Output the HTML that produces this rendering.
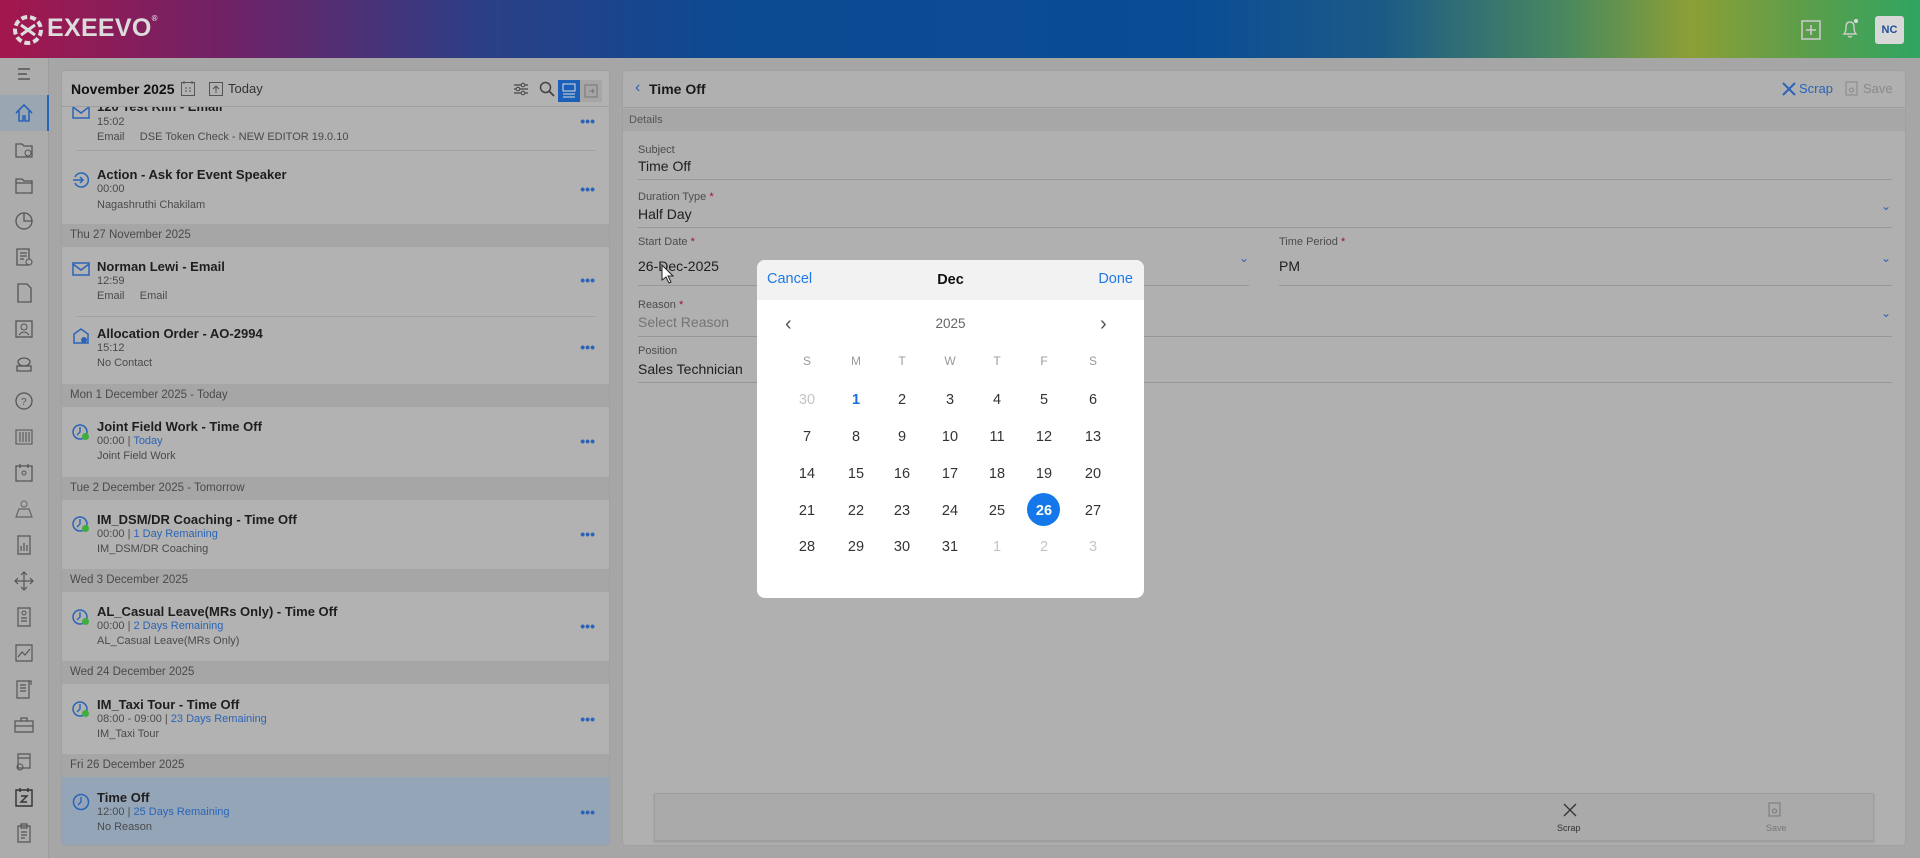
<!DOCTYPE html>
<html><head><meta charset="utf-8"><style>
*{margin:0;padding:0;box-sizing:border-box}
body{width:1920px;height:858px;overflow:hidden;background:#a6a6a6;font-family:"Liberation Sans",sans-serif;position:relative;color:#1a1a1a}
.a{position:absolute}
.hdr{left:0;top:0;width:1920px;height:58px;background:linear-gradient(90deg,#a3174d 0%,#6a2468 13%,#2c3f86 25%,#0c4a92 38%,#0a4d95 62%,#1c5a86 72%,#4d8a5c 82%,#8c9f36 88%,#5c9e4a 94%,#2fa562 100%)}
.side{left:0;top:58px;width:49px;height:800px;background:#acacac;border-right:1px solid #9c9c9c}
.si{position:absolute;left:13px;width:22px;height:22px}
.lp{left:61px;top:70px;width:549px;height:776px;background:#b2b2b2;border:1px solid #a0a0a0;border-radius:4px;overflow:hidden}
.rp{left:622px;top:70px;width:1284px;height:776px;background:#b0b0b0;border:1px solid #a0a0a0;border-radius:4px}
.band{position:absolute;left:0;width:549px;height:23px;background:#a6a6a6;font-size:11.5px;color:#4a4a4a;padding-left:8px;line-height:23px}
.t{position:absolute;left:35px;font-size:13px;font-weight:bold;color:#1e1e1e}
.s{position:absolute;left:35px;font-size:11px;color:#4a4a4a}
.b{color:#2a64b8}
.dots{position:absolute;right:14px;font-size:14px;color:#2a64b8;font-weight:bold}
.ic{position:absolute;left:10px;width:18px;height:18px}
.lbl{position:absolute;font-size:11px;color:#4c4c4c}
.val{position:absolute;font-size:14px;color:#1e1e1e}
.ul{position:absolute;height:1px;background:#979797}
.chev{position:absolute;color:#2a64b8;font-size:12px}
.pop{left:757px;top:260px;width:387px;height:338px;background:#fff;border-radius:8px;overflow:hidden}
.d{position:absolute;width:40px;text-align:center;font-size:14.5px;color:#333;transform:translateX(-20px)}
.g{color:#c4c4c4}
.w{position:absolute;width:40px;text-align:center;font-size:12px;color:#9a9a9a;transform:translateX(-20px);top:94px}
</style></head><body>
<div class="a hdr">
 <svg class="a" style="left:13px;top:15px" width="30" height="30" viewBox="0 0 30 30"><circle cx="15" cy="15" r="13" fill="none" stroke="#ddd" stroke-width="4" stroke-dasharray="6 3"/><path d="M8 10 L22 20 M22 10 L8 20" stroke="#ddd" stroke-width="3"/></svg>
 <div class="a" style="left:47px;top:14px;font-size:25px;font-weight:bold;color:#dcdcdc;letter-spacing:0.3px">EXEEVO<sup style="font-size:8px;vertical-align:top">®</sup></div>
 <svg class="a" style="left:1801px;top:20px" width="20" height="20"><rect x="1" y="1" width="18" height="18" fill="none" stroke="#ccc" stroke-width="1.5"/><path d="M10 5v10M5 10h10" stroke="#ccc" stroke-width="1.5"/></svg>
 <svg class="a" style="left:1840px;top:17px" width="20" height="24"><path d="M4 17 Q6 15 6 10 Q6 5 10 5 Q14 5 14 10 Q14 15 16 17 Z M8 19 Q10 21 12 19" fill="none" stroke="#ccc" stroke-width="1.4"/><circle cx="16" cy="4" r="2" fill="#ddd"/></svg>
 <div class="a" style="left:1875px;top:16px;width:29px;height:28px;background:#d8d8d8;border-radius:3px;font-size:11px;font-weight:bold;color:#1f4f9a;text-align:center;line-height:28px">NC</div>
</div>
<div class="a side">
 <div class="a" style="left:0;top:37px;width:49px;height:36px;background:#9ba6b3;border-right:2px solid #2a64b8"></div>
 <svg class="si" style="top:5px" viewBox="0 0 22 22"><path d="M5 6h12M5 11h9M5 16h12" stroke="#555" stroke-width="1.4"/></svg>
 <svg class="si" style="top:44px" viewBox="0 0 22 22"><path d="M3 11 L11 3 L19 11 M6 9 V19 H10 V14 H12 V19 H16 V9" fill="none" stroke="#2a64b8" stroke-width="1.6"/></svg>
 <svg class="si" style="top:80px" viewBox="0 0 22 22"><path d="M3 6h6l2 2h8v11H3z" fill="none" stroke="#555" stroke-width="1.3"/><circle cx="15" cy="15" r="3" fill="none" stroke="#555"/></svg>
 <svg class="si" style="top:116px" viewBox="0 0 22 22"><path d="M3 5h6l2 2h8v12H3z M3 9h16" fill="none" stroke="#555" stroke-width="1.3"/></svg>
 <svg class="si" style="top:152px" viewBox="0 0 22 22"><circle cx="11" cy="11" r="8" fill="none" stroke="#555" stroke-width="1.3"/><path d="M11 3v8h8" fill="none" stroke="#555" stroke-width="1.3"/></svg>
 <svg class="si" style="top:188px" viewBox="0 0 22 22"><path d="M4 3h12v16H4z M7 7h7M7 10h7M7 13h4" fill="none" stroke="#555" stroke-width="1.3"/><circle cx="16" cy="16" r="3" fill="#acacac" stroke="#555"/></svg>
 <svg class="si" style="top:224px" viewBox="0 0 22 22"><path d="M5 2h9l4 4v14H5z" fill="none" stroke="#555" stroke-width="1.3"/></svg>
 <svg class="si" style="top:260px" viewBox="0 0 22 22"><rect x="3" y="3" width="16" height="16" fill="none" stroke="#555" stroke-width="1.3"/><circle cx="11" cy="9" r="3" fill="none" stroke="#555"/><path d="M6 17q5-6 10 0" fill="none" stroke="#555"/></svg>
 <svg class="si" style="top:296px" viewBox="0 0 22 22"><ellipse cx="11" cy="8" rx="6" ry="4" fill="none" stroke="#555" stroke-width="1.3"/><path d="M4 12h14v5H4z" fill="none" stroke="#555" stroke-width="1.3"/></svg>
 <svg class="si" style="top:332px" viewBox="0 0 22 22"><circle cx="11" cy="11" r="8" fill="none" stroke="#555" stroke-width="1.3"/><text x="8" y="15" font-size="10" fill="#555" font-family="Liberation Sans">?</text></svg>
 <svg class="si" style="top:368px" viewBox="0 0 22 22"><path d="M3 4h16v14H3z M7 6v10M10 6v10M13 6v10M16 6v10" fill="none" stroke="#555" stroke-width="1.1"/></svg>
 <svg class="si" style="top:404px" viewBox="0 0 22 22"><path d="M3 4h16v15H3z M7 2v4M15 2v4" fill="none" stroke="#555" stroke-width="1.3"/><circle cx="11" cy="11" r="2" fill="none" stroke="#555"/></svg>
 <svg class="si" style="top:440px" viewBox="0 0 22 22"><circle cx="11" cy="6" r="3" fill="none" stroke="#666"/><path d="M3 19l3-8h10l3 8z" fill="none" stroke="#666" stroke-width="1.2"/></svg>
 <svg class="si" style="top:476px" viewBox="0 0 22 22"><path d="M5 2h12v18H5z M8 12v5M11 9v8M14 11v6" fill="none" stroke="#555" stroke-width="1.2"/></svg>
 <svg class="si" style="top:512px" viewBox="0 0 22 22"><path d="M11 2v18M2 11h18M8 5l3-3 3 3M8 17l3 3 3-3M5 8l-3 3 3 3M17 8l3 3-3 3" fill="none" stroke="#555" stroke-width="1.2"/></svg>
 <svg class="si" style="top:548px" viewBox="0 0 22 22"><path d="M5 2h12v18H5z M8 12h6M8 15h6" fill="none" stroke="#555" stroke-width="1.2"/><circle cx="11" cy="7" r="2" fill="none" stroke="#555"/></svg>
 <svg class="si" style="top:584px" viewBox="0 0 22 22"><path d="M3 3h16v16H3z M5 15l4-5 3 3 5-6" fill="none" stroke="#555" stroke-width="1.2"/></svg>
 <svg class="si" style="top:620px" viewBox="0 0 22 22"><path d="M4 3h12v17H4z M7 7h6M7 10h6M7 13h6M16 3h2v4" fill="none" stroke="#555" stroke-width="1.2"/></svg>
 <svg class="si" style="top:656px" viewBox="0 0 22 22"><path d="M2 7h18v11H2z M8 7V4h6v3M2 12h18" fill="none" stroke="#555" stroke-width="1.2"/></svg>
 <svg class="si" style="top:692px" viewBox="0 0 22 22"><path d="M5 4h12v14H5z M5 8h12" fill="none" stroke="#555" stroke-width="1.2"/><circle cx="7" cy="17" r="3" fill="none" stroke="#555"/></svg>
 <svg class="si" style="top:728px" viewBox="0 0 22 22"><path d="M3 4h16v16H3z M7 2v4M15 2v4M8 10h6l-6 6h6" fill="none" stroke="#333" stroke-width="1.4"/></svg>
 <svg class="si" style="top:764px" viewBox="0 0 22 22"><path d="M5 4h12v16H5z M8 2h6v4H8z M8 10h6M8 13h6M8 16h4" fill="none" stroke="#555" stroke-width="1.2"/></svg>
</div>

<div class="a lp">
 <div class="a" style="left:9px;top:44px;width:530px;height:1px"></div>
 <!-- item 1 (cut) -->
 <svg class="ic" style="top:32px" viewBox="0 0 18 18"><rect x="1" y="3" width="16" height="12" fill="none" stroke="#2a64b8" stroke-width="1.5"/><path d="M1 4l8 6 8-6" fill="none" stroke="#2a64b8" stroke-width="1.5"/></svg>
 <div class="t" style="top:28px">120 Test Klin - Email</div>
 <div class="s" style="top:45px">15:02</div>
 <div class="s" style="top:60px">Email &nbsp;&nbsp;&nbsp; DSE Token Check - NEW EDITOR 19.0.10</div>
 <div class="dots" style="top:42px">•••</div>
 <div class="a" style="left:14px;top:79px;width:520px;height:1px;background:#a2a2a2"></div>
 <div class="a" style="left:0;top:0;width:549px;height:36px;border-bottom:1px solid #9e9e9e;background:#b2b2b2"></div>
 <div class="a" style="left:9px;top:10px;font-size:14px;font-weight:bold;color:#111">November 2025</div>
 <svg class="a" style="left:118px;top:9px" width="16" height="17"><rect x="1.5" y="2.5" width="13" height="13" fill="none" stroke="#555"/><path d="M4 1v3M12 1v3M5 8h2M9 8h2M5 11h2M9 11h2" stroke="#555"/></svg>
 <svg class="a" style="left:146px;top:9px" width="16" height="17"><rect x="1.5" y="2.5" width="13" height="13" fill="none" stroke="#555"/><path d="M8 6v7M5 9l3-3 3 3" fill="none" stroke="#555"/></svg>
 <div class="a" style="left:166px;top:10px;font-size:13px;color:#333">Today</div>
 <svg class="a" style="left:451px;top:11px" width="16" height="14"><path d="M1 3h14M1 7h14M1 11h14" stroke="#444" stroke-width="1.3"/><circle cx="10" cy="3" r="1.8" fill="#b2b2b2" stroke="#444"/><circle cx="5" cy="7" r="1.8" fill="#b2b2b2" stroke="#444"/><circle cx="10" cy="11" r="1.8" fill="#b2b2b2" stroke="#444"/></svg>
 <svg class="a" style="left:477px;top:10px" width="16" height="16"><circle cx="6.5" cy="6.5" r="5" fill="none" stroke="#444" stroke-width="1.5"/><path d="M10 10l5 5" stroke="#444" stroke-width="1.8"/></svg>
 <div class="a" style="left:496px;top:9px;width:22px;height:22px;background:#1c5fb8"></div>
 <svg class="a" style="left:500px;top:12px" width="14" height="16"><rect x="1" y="1" width="12" height="7" fill="none" stroke="#ddd"/><path d="M1 11h12M1 14h12" stroke="#ddd"/></svg>
 <div class="a" style="left:518px;top:9px;width:22px;height:22px;background:#a6a6a6"></div>
 <svg class="a" style="left:522px;top:12px" width="14" height="15"><rect x="1" y="2" width="12" height="12" fill="none" stroke="#777"/><path d="M5 8h5M8 6l2 2-2 2" fill="none" stroke="#777"/></svg>

 <!-- action -->
 <svg class="ic" style="top:100px" viewBox="0 0 18 18"><path d="M3 6a7 7 0 1 1 0 6" fill="none" stroke="#2a64b8" stroke-width="1.5"/><path d="M1 9h10M8 6l3 3-3 3" fill="none" stroke="#2a64b8" stroke-width="1.5"/></svg>
 <div class="t" style="top:96px">Action - Ask for Event Speaker</div>
 <div class="s" style="top:112px">00:00</div>
 <div class="s" style="top:128px">Nagashruthi Chakilam</div>
 <div class="dots" style="top:110px">•••</div>
 <div class="band" style="top:153px">Thu 27 November 2025</div>
 <svg class="ic" style="top:189px" viewBox="0 0 18 18"><rect x="1" y="3" width="16" height="12" fill="none" stroke="#2a64b8" stroke-width="1.5"/><path d="M1 4l8 6 8-6" fill="none" stroke="#2a64b8" stroke-width="1.5"/></svg>
 <div class="t" style="top:188px">Norman Lewi - Email</div>
 <div class="s" style="top:204px">12:59</div>
 <div class="s" style="top:219px">Email &nbsp;&nbsp;&nbsp; Email</div>
 <div class="dots" style="top:201px">•••</div>
 <div class="a" style="left:14px;top:245px;width:520px;height:1px;background:#a2a2a2"></div>
 <svg class="ic" style="top:256px" viewBox="0 0 18 18"><path d="M2 16V7l7-5 7 5v9z" fill="none" stroke="#2a64b8" stroke-width="1.5"/><circle cx="12" cy="13" r="3" fill="#2a64b8"/></svg>
 <div class="t" style="top:255px">Allocation Order - AO-2994</div>
 <div class="s" style="top:271px">15:12</div>
 <div class="s" style="top:286px">No Contact</div>
 <div class="dots" style="top:268px">•••</div>
 <div class="band" style="top:313px">Mon 1 December 2025 - Today</div>
 <svg class="ic" style="top:352px" viewBox="0 0 18 18"><circle cx="8" cy="9" r="7" fill="none" stroke="#2a64b8" stroke-width="1.5"/><path d="M8 4v5l-3 3" fill="none" stroke="#2a64b8" stroke-width="1.4"/><circle cx="13.5" cy="13.5" r="3.5" fill="#3eae3e"/></svg>
 <div class="t" style="top:348px">Joint Field Work - Time Off</div>
 <div class="s" style="top:364px">00:00 | <span class="b">Today</span></div>
 <div class="s" style="top:379px">Joint Field Work</div>
 <div class="dots" style="top:362px">•••</div>
 <div class="band" style="top:406px">Tue 2 December 2025 - Tomorrow</div>
 <svg class="ic" style="top:444px" viewBox="0 0 18 18"><circle cx="8" cy="9" r="7" fill="none" stroke="#2a64b8" stroke-width="1.5"/><path d="M8 4v5l-3 3" fill="none" stroke="#2a64b8" stroke-width="1.4"/><circle cx="13.5" cy="13.5" r="3.5" fill="#3eae3e"/></svg>
 <div class="t" style="top:441px">IM_DSM/DR Coaching - Time Off</div>
 <div class="s" style="top:457px">00:00 | <span class="b">1 Day Remaining</span></div>
 <div class="s" style="top:472px">IM_DSM/DR Coaching</div>
 <div class="dots" style="top:455px">•••</div>
 <div class="band" style="top:498px">Wed 3 December 2025</div>
 <svg class="ic" style="top:537px" viewBox="0 0 18 18"><circle cx="8" cy="9" r="7" fill="none" stroke="#2a64b8" stroke-width="1.5"/><path d="M8 4v5l-3 3" fill="none" stroke="#2a64b8" stroke-width="1.4"/><circle cx="13.5" cy="13.5" r="3.5" fill="#3eae3e"/></svg>
 <div class="t" style="top:533px">AL_Casual Leave(MRs Only) - Time Off</div>
 <div class="s" style="top:549px">00:00 | <span class="b">2 Days Remaining</span></div>
 <div class="s" style="top:564px">AL_Casual Leave(MRs Only)</div>
 <div class="dots" style="top:547px">•••</div>
 <div class="band" style="top:590px">Wed 24 December 2025</div>
 <svg class="ic" style="top:629px" viewBox="0 0 18 18"><circle cx="8" cy="9" r="7" fill="none" stroke="#2a64b8" stroke-width="1.5"/><path d="M8 4v5l-3 3" fill="none" stroke="#2a64b8" stroke-width="1.4"/><circle cx="13.5" cy="13.5" r="3.5" fill="#3eae3e"/></svg>
 <div class="t" style="top:626px">IM_Taxi Tour - Time Off</div>
 <div class="s" style="top:642px">08:00 - 09:00 | <span class="b">23 Days Remaining</span></div>
 <div class="s" style="top:657px">IM_Taxi Tour</div>
 <div class="dots" style="top:640px">•••</div>
 <div class="band" style="top:683px">Fri 26 December 2025</div>
 <div class="a" style="left:0;top:706px;width:549px;height:70px;background:#95a5b8"></div>
 <svg class="ic" style="top:722px" viewBox="0 0 18 18"><circle cx="9" cy="9" r="7.5" fill="none" stroke="#2a64b8" stroke-width="1.5"/><path d="M9 4v5l-3 3" fill="none" stroke="#2a64b8" stroke-width="1.4"/></svg>
 <div class="t" style="top:719px">Time Off</div>
 <div class="s" style="top:735px">12:00 | <span class="b">25 Days Remaining</span></div>
 <div class="s" style="top:750px">No Reason</div>
 <div class="dots" style="top:733px">•••</div>
</div>

<div class="a rp">
 <div class="a" style="left:0;top:0;width:1282px;height:37px;border-bottom:1px solid #9c9c9c"></div>
 <div class="a" style="left:12px;top:8px;font-size:16px;color:#2a64b8">‹</div>
 <div class="a" style="left:26px;top:10px;font-size:14px;font-weight:bold;color:#1a1a1a">Time Off</div>
 <svg class="a" style="left:1159px;top:11px" width="14" height="14"><path d="M1 1l12 12M13 1L1 13" stroke="#2a64b8" stroke-width="2"/></svg>
 <div class="a" style="left:1176px;top:10px;font-size:13px;color:#2a64b8">Scrap</div>
 <svg class="a" style="left:1222px;top:10px" width="13" height="15"><rect x="1" y="1" width="11" height="13" fill="none" stroke="#888"/><circle cx="6.5" cy="9" r="2" fill="none" stroke="#888"/></svg>
 <div class="a" style="left:1240px;top:10px;font-size:13px;color:#8a8a8a">Save</div>
 <div class="a" style="left:0;top:38px;width:1282px;height:22px;background:#a7a7a7;font-size:11px;color:#555;padding-left:6px;line-height:22px">Details</div>
 <div class="lbl" style="left:15px;top:73px">Subject</div>
 <div class="val" style="left:15px;top:87px">Time Off</div>
 <div class="ul" style="left:15px;top:108px;width:1254px"></div>
 <div class="lbl" style="left:15px;top:120px">Duration Type <span style="color:#a01030">*</span></div>
 <div class="val" style="left:15px;top:135px">Half Day</div>
 <div class="chev" style="left:1258px;top:128px">⌄</div>
 <div class="ul" style="left:15px;top:156px;width:1254px"></div>
 <div class="lbl" style="left:15px;top:165px">Start Date <span style="color:#a01030">*</span></div>
 <div class="val" style="left:15px;top:187px">26-Dec-2025</div>
 <div class="chev" style="left:616px;top:180px">⌄</div>
 <div class="ul" style="left:15px;top:214px;width:611px"></div>
 <div class="lbl" style="left:656px;top:165px">Time Period <span style="color:#a01030">*</span></div>
 <div class="val" style="left:656px;top:187px">PM</div>
 <div class="chev" style="left:1258px;top:180px">⌄</div>
 <div class="ul" style="left:656px;top:214px;width:613px"></div>
 <div class="lbl" style="left:15px;top:228px">Reason <span style="color:#a01030">*</span></div>
 <div class="val" style="left:15px;top:243px;color:#747474">Select Reason</div>
 <div class="chev" style="left:1258px;top:235px">⌄</div>
 <div class="ul" style="left:15px;top:265px;width:1254px"></div>
 <div class="lbl" style="left:15px;top:274px">Position</div>
 <div class="val" style="left:15px;top:290px">Sales Technician</div>
 <div class="ul" style="left:15px;top:311px;width:1254px"></div>
 <div class="a" style="left:31px;top:722px;width:1220px;height:48px;background:#aaaaaa;border:1px solid #9e9e9e;box-shadow:0 1px 2px rgba(0,0,0,.15)"></div>
 <svg class="a" style="left:940px;top:732px" width="14" height="14"><path d="M1 1l12 12M13 1L1 13" stroke="#333" stroke-width="1.3"/></svg>
 <div class="a" style="left:934px;top:752px;font-size:9px;color:#333">Scrap</div>
 <svg class="a" style="left:1145px;top:731px" width="13" height="15"><rect x="1" y="1" width="11" height="13" fill="none" stroke="#777"/><circle cx="6.5" cy="9" r="2" fill="none" stroke="#777"/></svg>
 <div class="a" style="left:1143px;top:752px;font-size:9px;color:#777">Save</div>
</div>
<svg class="a" style="left:660px;top:264px" width="14" height="20"><path d="M2 1v15l4-3 3 6 2-1-3-6h5z" fill="#fff" stroke="#222"/></svg>

<div class="a pop">
 <div class="a" style="left:0;top:0;width:387px;height:40px;background:#f2f2f2"></div>
 <div class="a" style="left:10px;top:11px;font-size:14.5px;color:#1e7ae6">Cancel</div>
 <div class="a" style="left:0;width:387px;text-align:center;top:12px;font-size:14.5px;font-weight:bold;color:#111">Dec</div>
 <div class="a" style="right:11px;top:11px;font-size:14.5px;color:#1e7ae6">Done</div>
 <div class="a" style="left:28px;top:53px;font-size:20px;color:#555">‹</div>
 <div class="a" style="left:0;width:387px;text-align:center;top:56px;font-size:13.5px;color:#666">2025</div>
 <div class="a" style="left:343px;top:53px;font-size:20px;color:#555">›</div>
 <div class="w" style="left:50px">S</div><div class="w" style="left:99px">M</div><div class="w" style="left:145px">T</div><div class="w" style="left:193px">W</div><div class="w" style="left:240px">T</div><div class="w" style="left:287px">F</div><div class="w" style="left:336px">S</div>
 <div class="a" style="left:270px;top:233px;width:33px;height:33px;border-radius:50%;background:#1478ea"></div>
 <div class="d g" style="left:50px;top:132px">30</div><div class="d" style="left:99px;top:132px;color:#1a6fdc;font-weight:bold">1</div><div class="d" style="left:145px;top:132px">2</div><div class="d" style="left:193px;top:132px">3</div><div class="d" style="left:240px;top:132px">4</div><div class="d" style="left:287px;top:132px">5</div><div class="d" style="left:336px;top:132px">6</div>
 <div class="d" style="left:50px;top:169px">7</div><div class="d" style="left:99px;top:169px">8</div><div class="d" style="left:145px;top:169px">9</div><div class="d" style="left:193px;top:169px">10</div><div class="d" style="left:240px;top:169px">11</div><div class="d" style="left:287px;top:169px">12</div><div class="d" style="left:336px;top:169px">13</div>
 <div class="d" style="left:50px;top:206px">14</div><div class="d" style="left:99px;top:206px">15</div><div class="d" style="left:145px;top:206px">16</div><div class="d" style="left:193px;top:206px">17</div><div class="d" style="left:240px;top:206px">18</div><div class="d" style="left:287px;top:206px">19</div><div class="d" style="left:336px;top:206px">20</div>
 <div class="d" style="left:50px;top:243px">21</div><div class="d" style="left:99px;top:243px">22</div><div class="d" style="left:145px;top:243px">23</div><div class="d" style="left:193px;top:243px">24</div><div class="d" style="left:240px;top:243px">25</div><div class="d" style="left:287px;top:243px;color:#fff;font-weight:bold">26</div><div class="d" style="left:336px;top:243px">27</div>
 <div class="d" style="left:50px;top:279px">28</div><div class="d" style="left:99px;top:279px">29</div><div class="d" style="left:145px;top:279px">30</div><div class="d" style="left:193px;top:279px">31</div><div class="d g" style="left:240px;top:279px">1</div><div class="d g" style="left:287px;top:279px">2</div><div class="d g" style="left:336px;top:279px">3</div>
</div>
</body></html>
